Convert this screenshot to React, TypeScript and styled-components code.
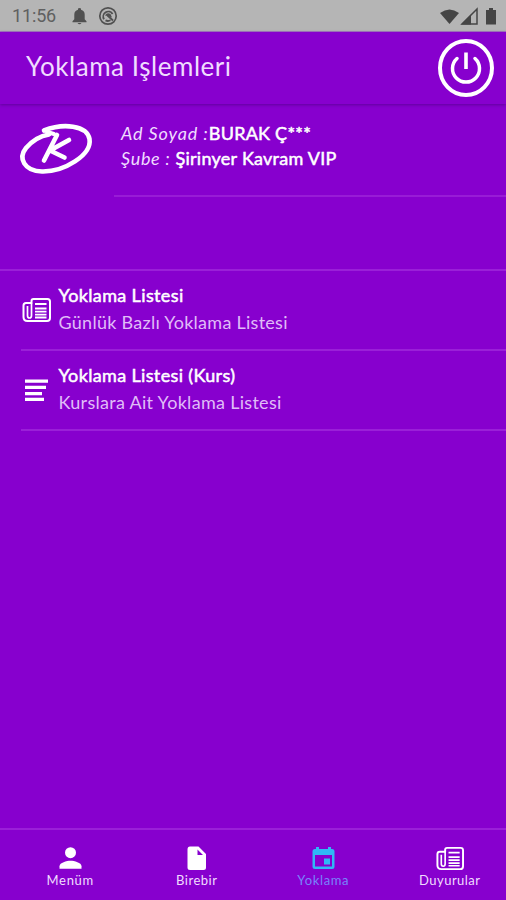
import React from "react";
import styled, { createGlobalStyle } from "styled-components";

const Global = createGlobalStyle`
  * { box-sizing: border-box; }
  body { margin: 0; background: #8700ce; }
`;

const Screen = styled.div`
  width: 506px;
  height: 900px;
  display: flex;
  flex-direction: column;
  overflow: hidden;
  background: #8700ce;
  color: #f0dcff;
  font-family: Lato, "Open Sans", sans-serif;
`;

const StatusBar = styled.div`
  height: 32px;
  flex: none;
  display: flex;
  align-items: center;
  padding: 0 8px 0 12px;
  background: #b5b5b5;
  color: #606060;
  border-bottom: 1px solid #a579c0;
`;

const Clock = styled.span`
  width: 60px;
  font: 400 18px/32px Roboto, sans-serif;
  letter-spacing: -0.15px;
`;

const StatusIcons = styled.div<{ $end?: boolean }>`
  display: flex;
  align-items: center;
  gap: ${(p) => (p.$end ? 0 : 11)}px;
  margin-left: ${(p) => (p.$end ? "auto" : "0")};
  svg { display: block; }
`;

const Header = styled.header`
  height: 72px;
  flex: none;
  display: flex;
  align-items: center;
  justify-content: space-between;
  padding: 0 11px 0 26px;
  box-shadow: 0 1px 3px rgba(60, 0, 110, 0.5);
`;

const Title = styled.h1`
  margin: 0 0 4px;
  font-size: 26px;
  font-weight: 400;
  line-height: 32px;
  letter-spacing: 0.55px;
  white-space: nowrap;
`;

const IconButton = styled.button`
  padding: 0;
  border: 0;
  background: none;
  color: #fff;
  svg { display: block; }
`;

const Profile = styled.section`
  height: 167px;
  flex: none;
  display: flex;
  border-bottom: 2px solid #9a20d8;
`;

const LogoBox = styled.div`
  width: 114px;
  flex: none;
  padding: 16px 0 0 16px;
  svg { display: block; }
`;

const ProfileText = styled.div`
  flex: 1;
  height: 93px;
  padding: 17px 0 0 7px;
  border-bottom: 2px solid #981cd6;
`;

const ProfileLine = styled.div<{ $spacing: number }>`
  font-size: 18px;
  line-height: 25px;
  white-space: nowrap;
  i { letter-spacing: ${(p) => p.$spacing}px; }
`;

const Strong = styled.span<{ $spacing: number }>`
  color: #fff;
  -webkit-text-stroke: 0.5px #fff;
  letter-spacing: ${(p) => p.$spacing}px;
`;

const List = styled.main`
  flex: 1;
  padding-left: 21px;
`;

const Row = styled.div`
  height: 80px;
  display: flex;
  border-bottom: 2px solid #9a20d8;
`;

const RowIcon = styled.div`
  width: 37.5px;
  flex: none;
  padding-top: 24px;
  color: #fff;
  svg { display: block; }
`;

const RowText = styled.div`
  padding-top: 10.5px;
  font-size: 18px;
  line-height: 27px;
  white-space: nowrap;
`;

const Sub = styled.div<{ $spacing: number }>`
  color: #e0bcf8;
  letter-spacing: ${(p) => p.$spacing}px;
`;

const TabBar = styled.nav`
  height: 72px;
  flex: none;
  display: grid;
  grid-template-columns: repeat(4, 126.5px);
  border-top: 2px solid #9a20d8;
  padding: 14px 0 0 7px;
`;

const Tab = styled.div<{ $active?: boolean; $spacing: number }>`
  display: flex;
  flex-direction: column;
  align-items: center;
  font-size: 13px;
  line-height: 15px;
  letter-spacing: ${(p) => p.$spacing}px;
  color: ${(p) => (p.$active ? "#7784fb" : "#f0dcff")};
  svg { display: block; color: ${(p) => (p.$active ? "#30b8f6" : "#fff")}; }
`;

const News = ({ size = 30 }: { size?: number }) => (
  <svg width={size} height={size} viewBox="0 0 30 30" fill="none" stroke="currentColor" strokeLinejoin="round">
    <path d="M12.500 4h14q2.500 0 2.500 2.500V23q0 3-3 3H6.500q-4 0-4-4V10.500q0-2.500 2.500-2.500h5.500V6q0-2 2-2z" strokeWidth="2" />
    <path d="M10.500 8v12.500q0 2.500-2 2.500t-2-2.500V11" strokeWidth="1.700" />
    <path d="M14 9h11.500M14 13.500h11.500M14 16.700h11.500M14 19.700h11.500M14 22.500h11.500" strokeWidth="1.800" />
  </svg>
);

const Lines = () => (
  <svg width="30" height="30" viewBox="0 0 30 30" fill="currentColor">
    <path d="M4 4.500h23v3.300H4zM4 10.700h21v3.300H4zM4 17h17v3.200H4zM4 22.800h19v3.300H4z" />
  </svg>
);

const Power = () => (
  <svg width="58" height="58" viewBox="0 0 58 58" fill="none" stroke="currentColor">
    <ellipse cx="29" cy="29" rx="26" ry="27" strokeWidth="4" />
    <path d="M20 19.500a13.500 13.500 0 1 0 18 0" strokeWidth="3.500" strokeLinecap="round" />
    <path d="M29 13.500v16.500" strokeWidth="3.600" />
  </svg>
);

const Logo = () => (
  <svg width="80" height="60" viewBox="0 0 80 60" fill="none" stroke="#fff" strokeLinecap="round" strokeLinejoin="round">
    <path d="M28 10.500C47 3 71 5 73.500 19C76 35 48 52 26 51.500C8 51 2 38 10 28C16 21 24 16 33 14.500" strokeWidth="4.600" />
    <path d="M41 15L28 40.500M53 20L34 30.500L48.500 37.500" strokeWidth="4.600" />
    <path d="M31 12L38 14" strokeWidth="4" />
  </svg>
);

const Bell = () => (
  <svg width="15" height="18" viewBox="0 0 15 18" fill="#505050">
    <path d="M6 2.700V1.500q1.500-1 3 0v1.200Q12.700 3.600 12.700 7.500v4.700l1.800 2v1.100H.5v-1.100l1.800-2V7.500q0-3.900 3.700-4.800zM5.500 16h4q-2 2.500-4 0z" />
  </svg>
);

const Badge = () => (
  <svg width="20" height="20" viewBox="0 0 20 20" fill="none" stroke="#505050">
    <circle cx="10" cy="10" r="8.200" strokeWidth="1.700" />
    <path d="M6 13.200A5 5 0 0 1 14.600 8M7.500 14.400Q10 15.600 12.500 14.300M9.500 9.500l5.500 5" strokeWidth="1.800" />
    <path d="M7 9.500Q9 6 12.500 8L14 11.500L10.500 10.200z" fill="#505050" stroke="none" />
  </svg>
);

const Signals = () => (
  <svg width="58" height="20" viewBox="0 0 58 20" fill="#454545">
    <path d="M0 7Q9.500 0 19 7L9.500 18z" />
    <path d="M22 18L37 3v15z" fill="none" stroke="#454545" strokeWidth="1.500" />
    <path d="M21 18.500L31 8.500v10z" />
    <path d="M46 4h3V2h4v2h3v14.500H46z" />
  </svg>
);

const Person = () => (
  <svg width="29" height="29" viewBox="0 0 29 29" fill="currentColor">
    <circle cx="14.500" cy="8.700" r="5.500" />
    <path d="M3.500 24.700v-2.500c0-3.600 7.300-5.500 11-5.500s11 1.900 11 5.500v2.500z" />
  </svg>
);

const File = () => (
  <svg width="29" height="29" viewBox="0 0 29 29" fill="currentColor">
    <path fillRule="evenodd" d="M8 2.500h8.500l7.500 7.500v13.500q0 2.500-2.500 2.500h-13.500Q5.500 26 5.500 23.500v-18q0-3 2.500-3zM15.500 5.500v5.500h5.500z" />
  </svg>
);

const Calendar = () => (
  <svg width="29" height="29" viewBox="0 0 29 29" fill="currentColor">
    <path fillRule="evenodd" d="M7 3h3v2h9V3h3v2h1q2.500 0 2.500 2.500v15Q25.500 25 23 25H6q-2.500 0-2.500-2.500v-15Q3.500 5 6 5h1zM6 11v11.500h17V11zM15 14.500h6v6h-6z" />
  </svg>
);

export default function App() {
  return (
    <>
      <Global />
      <Screen>
        <StatusBar>
          <Clock>11:56</Clock>
          <StatusIcons><Bell /><Badge /></StatusIcons>
          <StatusIcons $end><Signals /></StatusIcons>
        </StatusBar>
        <Header>
          <Title>Yoklama Işlemleri</Title>
          <IconButton aria-label="Çıkış"><Power /></IconButton>
        </Header>
        <Profile>
          <LogoBox><Logo /></LogoBox>
          <ProfileText>
            <ProfileLine $spacing={0.9}><i>Ad Soyad :</i><Strong $spacing={0.25}>BURAK Ç***</Strong></ProfileLine>
            <ProfileLine $spacing={0.7}><i>Şube : </i><Strong $spacing={0.27}>Şirinyer Kavram VIP</Strong></ProfileLine>
          </ProfileText>
        </Profile>
        <List>
          <Row>
            <RowIcon><News /></RowIcon>
            <RowText>
              <Strong $spacing={0.37}>Yoklama Listesi</Strong>
              <Sub $spacing={0.27}>Günlük Bazlı Yoklama Listesi</Sub>
            </RowText>
          </Row>
          <Row>
            <RowIcon><Lines /></RowIcon>
            <RowText>
              <Strong $spacing={0.35}>Yoklama Listesi (Kurs)</Strong>
              <Sub $spacing={0.3}>Kurslara Ait Yoklama Listesi</Sub>
            </RowText>
          </Row>
        </List>
        <TabBar>
          <Tab $spacing={0.7}><Person />Menüm</Tab>
          <Tab $spacing={0.5}><File />Birebir</Tab>
          <Tab $active $spacing={0.65}><Calendar />Yoklama</Tab>
          <Tab $spacing={0.45}><News size={29} />Duyurular</Tab>
        </TabBar>
      </Screen>
    </>
  );
}
